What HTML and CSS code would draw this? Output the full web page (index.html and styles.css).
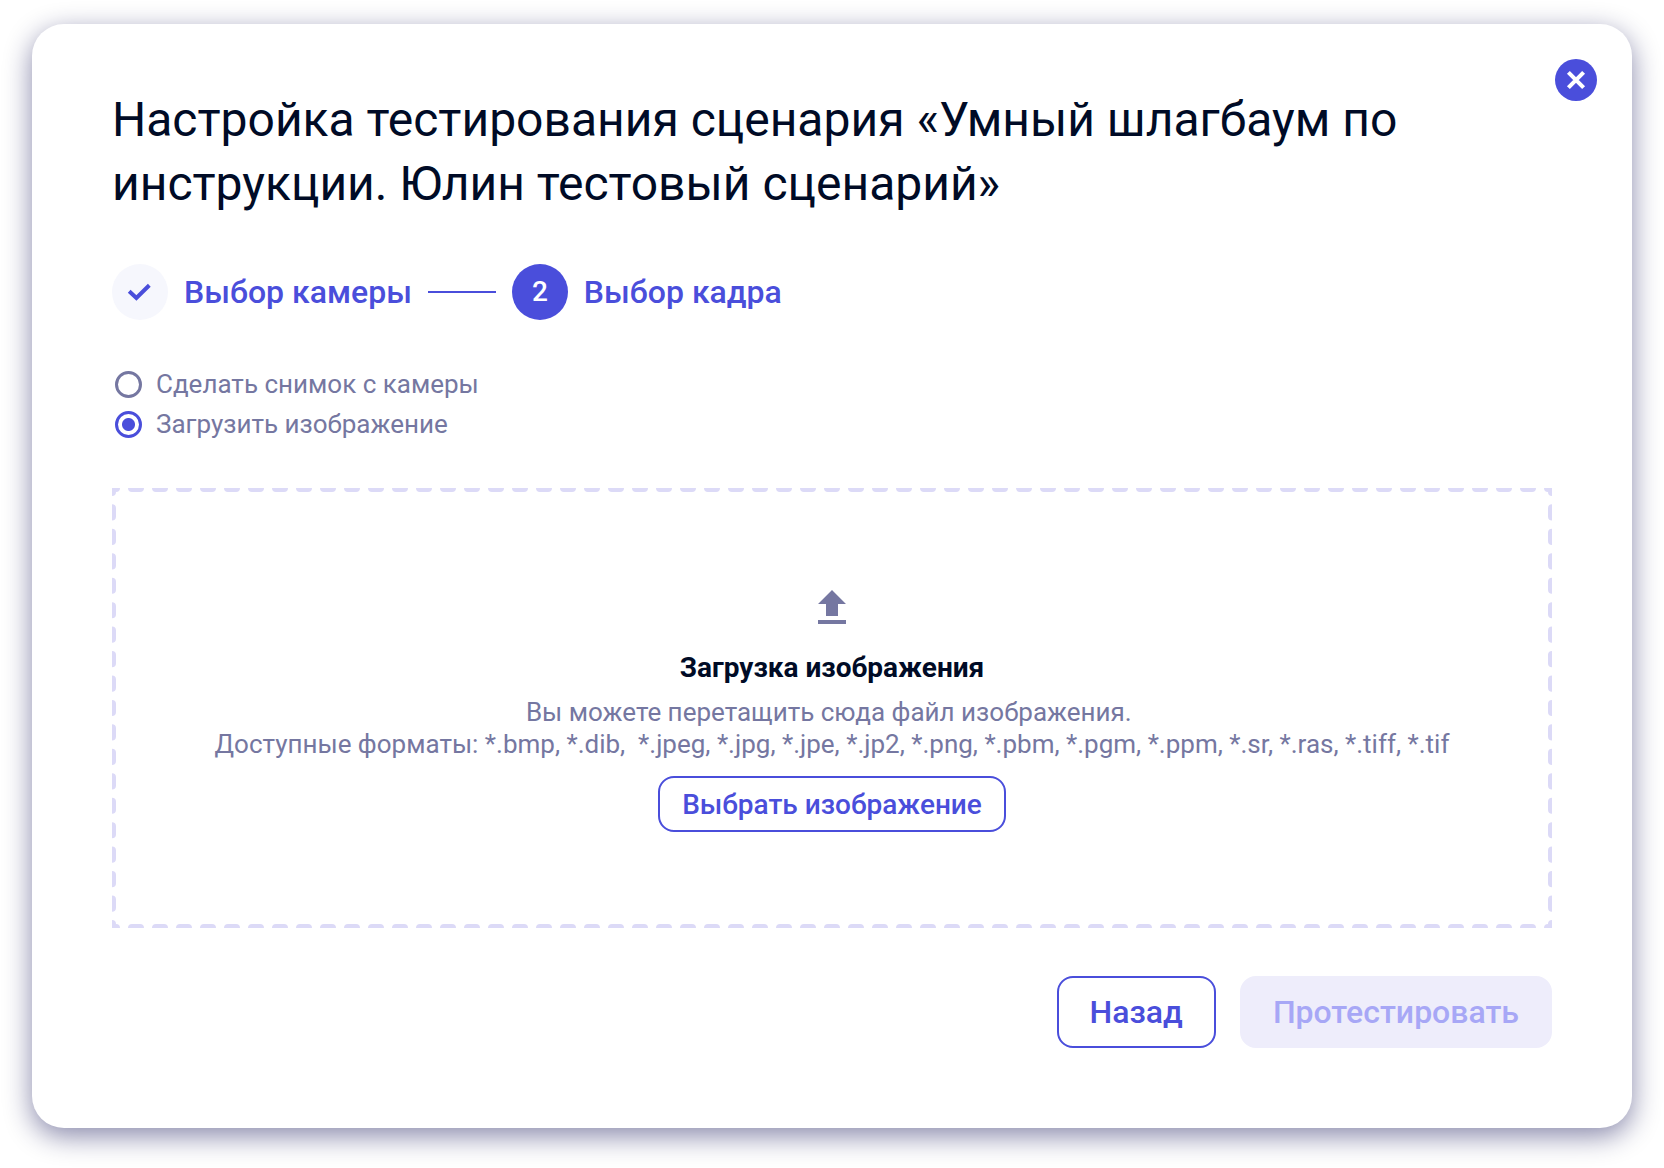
FILE: index.html
```html
<!DOCTYPE html>
<html lang="ru">
<head>
    <meta charset="UTF-8">
    <meta name="viewport" content="width=device-width, initial-scale=1">
    <title>Настройка тестирования сценария</title>
    <link rel="stylesheet" href="styles.css">
</head>
<body>
    <main class="modal">
        <button type="button" class="close-button" aria-label="Закрыть">
            <svg width="42" height="42" viewBox="0 0 42 42">
                <circle cx="21" cy="21" r="21" fill="#4a4edb"/>
                <path d="M13.4 13.4l15.2 15.2M28.6 13.4L13.4 28.6" stroke="#fff" stroke-width="4.1"/>
            </svg>
        </button>

        <h1 class="title">Настройка тестирования сценария «Умный шлагбаум по инструкции. Юлин тестовый сценарий»</h1>

        <ol class="steps">
            <li class="step">
                <span class="step-icon done">
                    <svg width="56" height="56" viewBox="0 0 56 56" fill="none">
                        <path d="M17.2 27.2l7.2 6.8L37.3 21.3" stroke="#4a4edb" stroke-width="4"/>
                    </svg>
                </span>
                <span>Выбор камеры</span>
            </li>
            <li class="step">
                <span class="step-icon">2</span>
                <span>Выбор кадра</span>
            </li>
        </ol>

        <form class="form" id="frameForm">
            <div class="sources">
                <label class="source">
                    <input type="radio" name="source" value="camera">
                    <span>Сделать снимок с камеры</span>
                </label>
                <label class="source">
                    <input type="radio" name="source" value="file" checked>
                    <span>Загрузить изображение</span>
                </label>
            </div>

            <section class="dropzone">
                <!-- each side has its own line so the dashes meet evenly in the corners -->
                <svg class="dashes" aria-hidden="true">
                    <line x1="0" y1="0" x2="100%" y2="0" pathLength="1440"/>
                    <line x1="0" y1="100%" x2="100%" y2="100%" pathLength="1440"/>
                    <line x1="0" y1="0" x2="0" y2="100%" pathLength="432"/>
                    <line x1="100%" y1="0" x2="100%" y2="100%" pathLength="432"/>
                </svg>
                <svg class="upload-icon" width="48" height="48" viewBox="0 0 24 24">
                    <path d="M5 20h14v-2H5v2zm0-10h4v6h6v-6h4l-7-7-7 7z"/>
                </svg>
                <h2 class="dropzone-title">Загрузка изображения</h2>
                <p class="dropzone-text">Вы можете перетащить сюда файл изображения.&nbsp;<br>Доступные форматы: *.bmp, *.dib,&nbsp; *.jpeg, *.jpg, *.jpe, *.jp2, *.png, *.pbm, *.pgm, *.ppm, *.sr, *.ras, *.tiff, *.tif</p>
                <button type="button" class="button small">Выбрать изображение</button>
            </section>

            <div class="actions">
                <button type="button" class="button">Назад</button>
                <button type="submit" class="button" disabled>Протестировать</button>
            </div>
        </form>
    </main>
</body>
</html>
```
FILE: styles.css
```css
* {
    box-sizing: border-box;
}

body {
    margin: 0;
    padding: 24px 32px 40px;
    background: #fff;
    color: #000b26;
    font-family: Roboto, "Liberation Sans", sans-serif;
}

.modal {
    position: relative;
    display: flex;
    flex-direction: column;
    gap: 48px;
    padding: 64px 80px 80px;
    border-radius: 32px;
    background: #fff;
    box-shadow: 0 8px 28px rgba(0, 0, 74, 0.47);
}

.close-button {
    position: absolute;
    top: 35px;
    right: 35px;
    padding: 0;
    border: none;
    background: none;
    cursor: pointer;
}

.close-button svg {
    display: block;
}

.title {
    margin: 0;
    font-size: 48px;
    font-weight: 400;
    line-height: 64px;
}

.steps {
    display: flex;
    gap: 16px;
    margin: 0;
    padding: 0;
    list-style: none;
    color: #4a4edb;
    font-size: 32px;
    font-weight: 500;
    line-height: 40px;
}

.step {
    display: flex;
    align-items: center;
    gap: 16px;
}

.step:not(:last-child)::after {
    content: "";
    width: 68px;
    height: 2px;
    background: #4a4edb;
}

.step-icon {
    display: flex;
    align-items: center;
    justify-content: center;
    width: 56px;
    height: 56px;
    border-radius: 50%;
    background: #4a4edb;
    color: #fff;
    font-size: 28px;
}

.step-icon.done {
    background: #f6f7fd;
}

.form {
    display: flex;
    flex-direction: column;
    gap: 48px;
}

.sources {
    display: flex;
    flex-direction: column;
    align-items: flex-start;
    gap: 8px;
}

.source {
    display: flex;
    align-items: center;
    gap: 14px;
    padding-left: 3px;
    color: #7577a1;
    font-size: 26px;
    line-height: 32px;
}

.source input {
    appearance: none;
    width: 27px;
    height: 27px;
    margin: 0;
    border: 3px solid #7577a1;
    border-radius: 50%;
}

.source input:checked {
    border-color: #4a4edb;
    background: radial-gradient(circle, #4a4edb 6px, transparent 7px);
}

.dropzone {
    position: relative;
    display: flex;
    flex-direction: column;
    align-items: center;
    padding: 96px 80px;
    text-align: center;
}

.dashes {
    position: absolute;
    inset: 0;
    width: 100%;
    height: 100%;
    overflow: hidden;
    pointer-events: none;
}

.dashes line {
    stroke: #dcdaf7;
    stroke-width: 8px;
    stroke-linecap: round;
    stroke-dasharray: 8 16;
    stroke-dashoffset: 4;
}

.upload-icon {
    fill: #7577a1;
}

.dropzone-title {
    margin: 16px 0 8px;
    font-size: 28px;
    font-weight: 700;
    line-height: 40px;
}

.dropzone-text {
    margin: 0 0 16px;
    color: #7577a1;
    font-size: 26px;
    line-height: 32px;
}

.actions {
    display: flex;
    justify-content: flex-end;
    gap: 24px;
}

.button {
    height: 72px;
    padding: 0 31px;
    border: 2px solid #4a4edb;
    border-radius: 16px;
    background: #fff;
    color: #4a4edb;
    font-family: inherit;
    font-size: 32px;
    font-weight: 500;
    cursor: pointer;
}

.button.small {
    height: 56px;
    padding: 0 22px;
    font-size: 28px;
}

.button:disabled {
    border-color: #eeedfb;
    background: #eeedfb;
    color: #a7a7f6;
    cursor: default;
}
```
